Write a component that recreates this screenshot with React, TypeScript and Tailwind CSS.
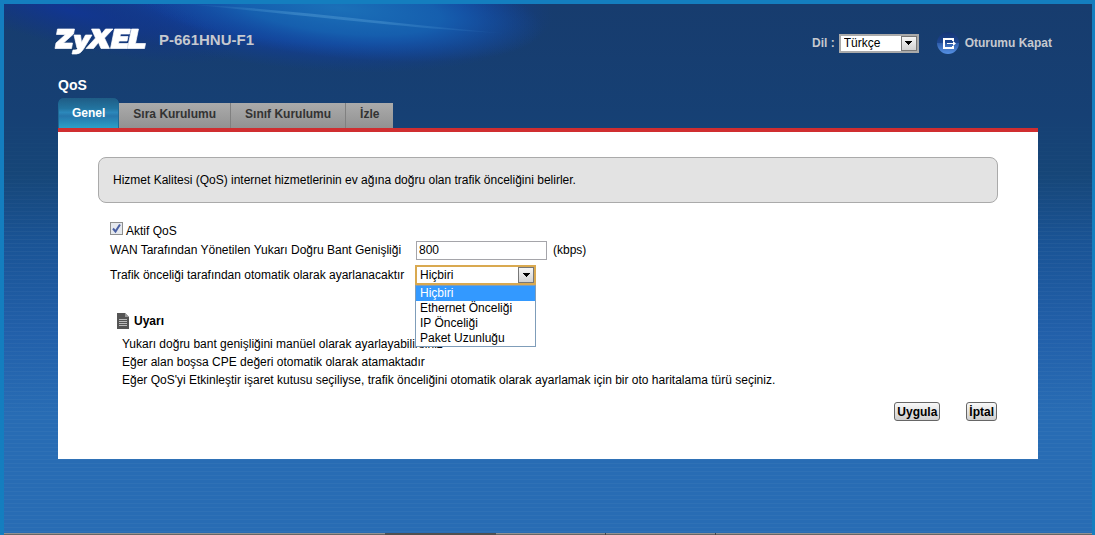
import { useState } from 'react';

const tabs = ['Genel', 'Sıra Kurulumu', 'Sınıf Kurulumu', 'İzle'];
const priorities = ['Hiçbiri', 'Ethernet Önceliği', 'IP Önceliği', 'Paket Uzunluğu'];
const notes = [
  'Yukarı doğru bant genişliğini manüel olarak ayarlayabilirsiniz',
  'Eğer alan boşsa CPE değeri otomatik olarak atamaktadır',
  "Eğer QoS'yi Etkinleştir işaret kutusu seçiliyse, trafik önceliğini otomatik olarak ayarlamak için bir oto haritalama türü seçiniz.",
];

function Arrow() {
  return (
    <span className="pointer-events-none absolute inset-y-0.5 right-0.5 flex w-4 items-center justify-center border border-[#777] bg-gradient-to-b from-[#f6f6f6] to-[#d2d2d2]">
      <svg width="7" height="4" viewBox="0 0 7 4" shapeRendering="crispEdges" aria-hidden="true">
        <path d="M0 0h7v1H6v1H5v1H4v1H3V3H2V2H1V1H0z" fill="#000" />
      </svg>
    </span>
  );
}

function Glow() {
  return (
    <svg className="pointer-events-none absolute top-0 left-0" width="560" height="80" viewBox="0 0 560 80" aria-hidden="true">
      <defs>
        <radialGradient id="deep" gradientUnits="userSpaceOnUse" cx="0" cy="0" r="1" gradientTransform="translate(285 -14) rotate(6) scale(265 78)">
          <stop offset="0" stopColor="#1246a4" />
          <stop offset="0.65" stopColor="#12409a" stopOpacity="0.9" />
          <stop offset="1" stopColor="#123c90" stopOpacity="0" />
        </radialGradient>
        <radialGradient id="bright" gradientUnits="userSpaceOnUse" cx="0" cy="0" r="1" gradientTransform="translate(335 4) rotate(6) scale(205 50)">
          <stop offset="0" stopColor="#1b70b8" />
          <stop offset="0.5" stopColor="#1664b2" stopOpacity="0.85" />
          <stop offset="1" stopColor="#1450aa" stopOpacity="0" />
        </radialGradient>
        <radialGradient id="corner" gradientUnits="userSpaceOnUse" cx="0" cy="0" r="1" gradientTransform="translate(65 6) rotate(14) scale(170 36)">
          <stop offset="0" stopColor="#113692" />
          <stop offset="1" stopColor="#11318c" stopOpacity="0" />
        </radialGradient>
        <linearGradient id="streak" x1="0" x2="1">
          <stop offset="0" stopColor="#4b9bd4" stopOpacity="0" />
          <stop offset="0.35" stopColor="#4b95d0" stopOpacity="0.55" />
          <stop offset="0.6" stopColor="#4b95d0" stopOpacity="0.5" />
          <stop offset="1" stopColor="#3a80c8" stopOpacity="0" />
        </linearGradient>
      </defs>
      <rect width="560" height="80" fill="url(#deep)" />
      <rect width="560" height="80" fill="url(#corner)" />
      <rect width="560" height="80" fill="url(#bright)" />
      <path d="M180 0C290 5 360 17 510 30C400 24 340 15 180 0Z" fill="url(#streak)" />
    </svg>
  );
}

function Logo() {
  return (
    <svg width="94" height="32" viewBox="0 3 94 32" role="img" aria-label="ZyXEL">
      <g fill="#fff" stroke="#fff" strokeWidth="0.7">
        <path d="M3.500 4H20.500L19.500 9L9.500 18H18.500L17.500 23.500H1L2 18L11.500 9.500H2.500z" />
        <path d="M20 10H26.500L27.500 17.500L31.500 10H38L29.500 24Q26.500 29 22.500 29H18L19 25H21Q23 25 23.500 23.500L23 23z" />
        <path d="M37.500 4H45.500L47.500 9L51.500 4H59L50.500 13L55.500 23.500H47L44.500 17.500L39.500 23.500H32L41.500 13z" />
        <path d="M60.500 4H76.500L75.500 9H66.500L66 11.500H74L73 16H65L64.500 18.500H74L73 23.500H56.500z" />
        <path d="M77.500 4H84.500L81.500 18.500H91.500L90.500 23.500H73.500z" />
      </g>
    </svg>
  );
}

function LogoutIcon() {
  return (
    <svg width="22" height="22" viewBox="0 0 22 22" aria-hidden="true">
      <defs>
        <linearGradient id="disc" x1="0" y1="0" x2="0" y2="1">
          <stop offset="0" stopColor="#153474" />
          <stop offset="0.48" stopColor="#1d4792" />
          <stop offset="0.52" stopColor="#3160ad" />
          <stop offset="1" stopColor="#5590e4" />
        </linearGradient>
      </defs>
      <circle cx="11" cy="11" r="11" fill="url(#disc)" />
      <path d="M16 9V7H7V16H16V14" fill="none" stroke="#fff" strokeWidth="2" />
      <path d="M10 11.500H18" stroke="#fff" />
      <path d="M16 9L19 11.500L16 14z" fill="#fff" />
    </svg>
  );
}

function NoteIcon() {
  return (
    <svg width="12" height="16" viewBox="0 0 12 16" aria-hidden="true">
      <path d="M0 0H8L12 4V16H0z" fill="#555" />
      <path d="M8 0V4H12z" fill="#999" />
      <path d="M2 6.500H10M2 8.500H10M2 10.500H10M2 12.500H10" stroke="#bbb" shapeRendering="crispEdges" />
    </svg>
  );
}

const buttonStyle =
  'h-[19px] rounded-[3px] border border-[#666] bg-gradient-to-b from-[#f8f8f8] to-[#cfcfcf] px-0.5 text-xs leading-4 font-bold';

export default function App() {
  const [active, setActive] = useState(0);
  const [choice, setChoice] = useState(0);

  return (
    <div className="flex min-h-screen flex-col border-x-4 border-t-4 border-[#147ebf] border-r-[3px] bg-[#286cb4] font-['Liberation_Sans',Arial,sans-serif] text-xs text-black">
      <div className="relative flex flex-1 flex-col bg-[linear-gradient(to_bottom,#173c6e_0px,#164074_110px,#164678_170px,#1a5496_240px,#2260aa_330px,#286cb4_410px)]">
        <div className="pointer-events-none absolute inset-0 bg-[repeating-linear-gradient(to_bottom,transparent_0px,transparent_3px,rgba(255,255,255,0.035)_3px,rgba(255,255,255,0.035)_4px)] [mask-image:linear-gradient(to_bottom,transparent_100px,black_230px)]" />
        <Glow />
        <header className="relative flex items-start justify-between pt-6 pr-10 pl-[50px]">
          <div className="flex items-start gap-[11px]">
            <Logo />
            <h1 className="pt-[3px] text-[15px] leading-[18px] font-bold text-[#c6c9cf]">P-661HNU-F1</h1>
          </div>
          <div className="flex items-center pt-1 font-bold text-[#c6c9cf]">
            <label htmlFor="language" className="mr-1">Dil :</label>
            <div className="relative h-[19px] w-20">
              <select id="language" className="block h-full w-full appearance-none border-2 border-[#aaa] bg-white pl-[3px] text-xs leading-[15px] font-normal text-black outline-none">
                <option>Türkçe</option>
              </select>
              <Arrow />
            </div>
            <a href="#logout" className="ml-[18px] flex items-center gap-[6px]">
              <LogoutIcon />
              Oturumu Kapat
            </a>
          </div>
        </header>

        <main className="relative mr-[54px] ml-[54px]">
          <h2 className="pt-[15px] text-sm leading-5 font-bold text-white">QoS</h2>
          <nav className="mt-0.5 flex h-[31px] items-end pt-px">
            {tabs.map((tab, i) => (
              <button
                key={tab}
                type="button"
                aria-pressed={i === active}
                onClick={() => setActive(i)}
                className={
                  i === active
                    ? 'h-[30px] rounded-t-md border-x border-[#1f6a96] bg-[linear-gradient(to_bottom,#1f5c85_0%,#2274a0_35%,#2c88bb_48%,#2676ab_60%,#2ba0c8_100%)] px-[13px] text-xs font-bold text-white'
                    : 'h-[25px] border-r border-[#808080] bg-gradient-to-b from-[#ababab] to-[#929292] px-[14px] pb-[3px] text-xs font-bold text-[#333] last:border-r-0'
                }
              >
                {tab}
              </button>
            ))}
          </nav>

          <section className="border-t-4 border-[#d02e30] bg-white px-10 pt-[25px] pb-[38px]">
            <p className="rounded-[8px] border border-[#aaa] bg-[#e3e3e3] px-[14px] py-[14px] leading-4">
              Hizmet Kalitesi (QoS) internet hizmetlerinin ev ağına doğru olan trafik önceliğini belirler.
            </p>

            <form className="pt-[19px] pl-3" onSubmit={(e) => e.preventDefault()}>
              <label className="flex h-[18px] items-start gap-[3px]">
                <span className="relative h-[13px] w-[13px]">
                  <input type="checkbox" defaultChecked className="peer block h-[13px] w-[13px] appearance-none border border-[#8e8f8f] bg-[#e6e9ee]" />
                  <svg className="pointer-events-none absolute inset-0 hidden peer-checked:block" width="13" height="13" viewBox="0 0 13 13" aria-hidden="true">
                    <path d="M3 6.500L5.500 9.500L10 2.500" fill="none" stroke="#4a60a4" strokeWidth="2" />
                  </svg>
                </span>
                <span className="pt-px">Aktif QoS</span>
              </label>
              <div className="flex h-5 items-center">
                <label htmlFor="bandwidth" className="w-[306px] shrink-0">
                  WAN Tarafından Yönetilen Yukarı Doğru Bant Genişliği
                </label>
                <input id="bandwidth" defaultValue="800" className="h-[19px] w-[131px] border border-[#a5a5aa] bg-white px-0.5 text-xs outline-none" />
                <span className="pl-[6px]">(kbps)</span>
              </div>
              <div className="mt-[5px] flex h-5 items-center">
                <label htmlFor="priority" className="w-[305px] shrink-0 whitespace-nowrap">
                  Trafik önceliği tarafından otomatik olarak ayarlanacaktır
                </label>
                <div className="relative h-5 w-[121px]">
                  <select
                    id="priority"
                    value={choice}
                    onChange={(e) => setChoice(Number(e.target.value))}
                    className="block h-full w-full appearance-none border-2 border-[#d9a950] bg-white pl-[3px] text-xs leading-4 outline-none"
                  >
                    {priorities.map((name, i) => (
                      <option key={name} value={i}>{name}</option>
                    ))}
                  </select>
                  <Arrow />
                  <ul className="absolute top-5 left-0 z-10 w-full border border-[#7f9db9] bg-white">
                    {priorities.map((name, i) => (
                      <li
                        key={name}
                        onClick={() => setChoice(i)}
                        className={i === choice ? 'bg-[#3399ff] pl-1 leading-[15px] text-white' : 'pl-1 leading-[15px]'}
                      >
                        {name}
                      </li>
                    ))}
                  </ul>
                </div>
              </div>

              <div className="flex items-center gap-[5px] pt-7 pl-[7px] font-bold">
                <NoteIcon />
                <h3>Uyarı</h3>
              </div>
              <div className="pt-[6px] pl-3 leading-[18px]">
                {notes.map((note) => (
                  <p key={note}>{note}</p>
                ))}
              </div>

              <div className="flex justify-end gap-[26px] pt-[13px] pr-px">
                <button type="submit" className={buttonStyle}>Uygula</button>
                <button type="reset" className={buttonStyle}>İptal</button>
              </div>
            </form>
          </section>
        </main>
        <div className="relative mt-auto flex h-0.5 border-t border-[#929292] bg-[#666]">
          <div className="-mt-px ml-[381px] w-[111px] bg-[#505050]" />
          <div className="-mt-px w-[110px] border-r border-[#444]" />
          <div className="-mt-px w-[110px] border-r border-[#444]" />
        </div>
      </div>
    </div>
  );
}
